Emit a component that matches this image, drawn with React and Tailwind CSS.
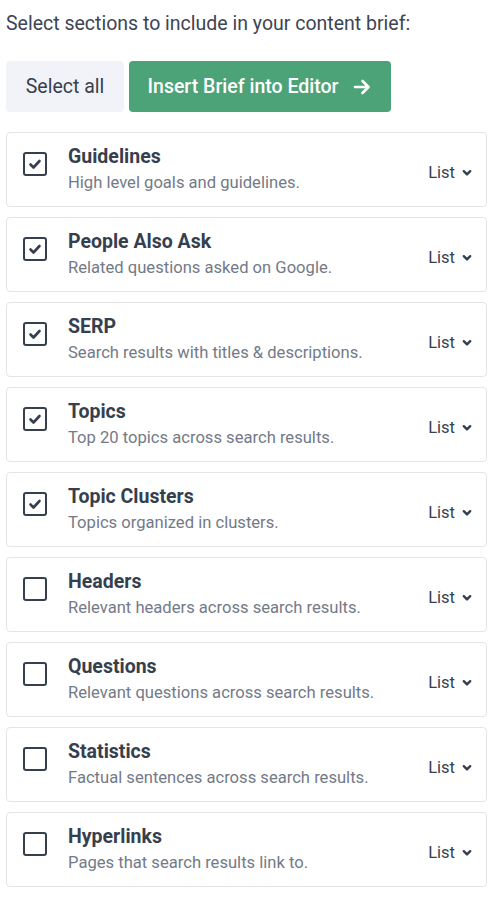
import React from "react";

const items = [
  ["Guidelines", "High level goals and guidelines.", true],
  ["People Also Ask", "Related questions asked on Google.", true],
  ["SERP", "Search results with titles & descriptions.", true],
  ["Topics", "Top 20 topics across search results.", true],
  ["Topic Clusters", "Topics organized in clusters.", true],
  ["Headers", "Relevant headers across search results.", false],
  ["Questions", "Relevant questions across search results.", false],
  ["Statistics", "Factual sentences across search results.", false],
  ["Hyperlinks", "Pages that search results link to.", false],
];

function Checkbox({ checked }) {
  return (
    <div className="w-[24px] h-[24px] mt-[19px] rounded-[3px] border-[2.5px] border-[#363f4e] flex items-center justify-center shrink-0">
      {checked && (
        <svg width="14" height="14" viewBox="0 0 14 14" fill="none">
          <path d="M2.5 7.5l3 3 6-6.5" stroke="#363f4e" strokeWidth="2.6" strokeLinecap="round" strokeLinejoin="round" />
        </svg>
      )}
    </div>
  );
}

export default function App() {
  return (
    <div className="w-[500px] bg-white pl-[6px] pr-[13px] pt-[11px] font-['Roboto',sans-serif] text-[#363f4e]">
      <p className="text-[19.5px] leading-[26px] text-[#3d4554]">Select sections to include in your content brief:</p>
      <div className="flex gap-[5px] mt-[24px]">
        <button className="h-[51px] w-[118px] rounded-[4px] bg-[#f2f3f8] text-[19.5px] text-[#363f4e]">Select all</button>
        <button className="h-[51px] w-[262px] rounded-[4px] bg-[#4ca378] text-white text-[19.5px] font-medium flex items-center justify-center gap-[14px]">
          Insert Brief into Editor
          <svg width="20" height="20" viewBox="0 0 20 20" fill="none">
            <path d="M3 10h13M10.5 4l6 6-6 6" stroke="white" strokeWidth="2.6" strokeLinecap="round" strokeLinejoin="round" />
          </svg>
        </button>
      </div>
      <div className="flex flex-col gap-[10px] mt-[20px]">
        {items.map(([t, d, c]) => (
          <div key={t} className="h-[75px] border border-[#e3e5e9] rounded-[4px] flex items-start pl-[16px] pr-[14px]">
            <Checkbox checked={c} />
            <div className="ml-[21px] flex-1 mt-[12px]">
              <div className="text-[19.5px] leading-[24px] font-bold text-[#363f4e]">{t}</div>
              <div className="text-[16.6px] leading-[20px] mt-[4px] text-[#737a87]">{d}</div>
            </div>
            <div className="flex items-center gap-[7px] mt-[30px] text-[16.5px] leading-[20px] text-[#363f4e]">
              List
              <svg width="10" height="10" viewBox="0 0 10 10" fill="none">
                <path d="M1.8 3.2L5 6.4l3.2-3.2" stroke="#363f4e" strokeWidth="2.4" strokeLinecap="round" strokeLinejoin="round" />
              </svg>
            </div>
          </div>
        ))}
      </div>
    </div>
  );
}
